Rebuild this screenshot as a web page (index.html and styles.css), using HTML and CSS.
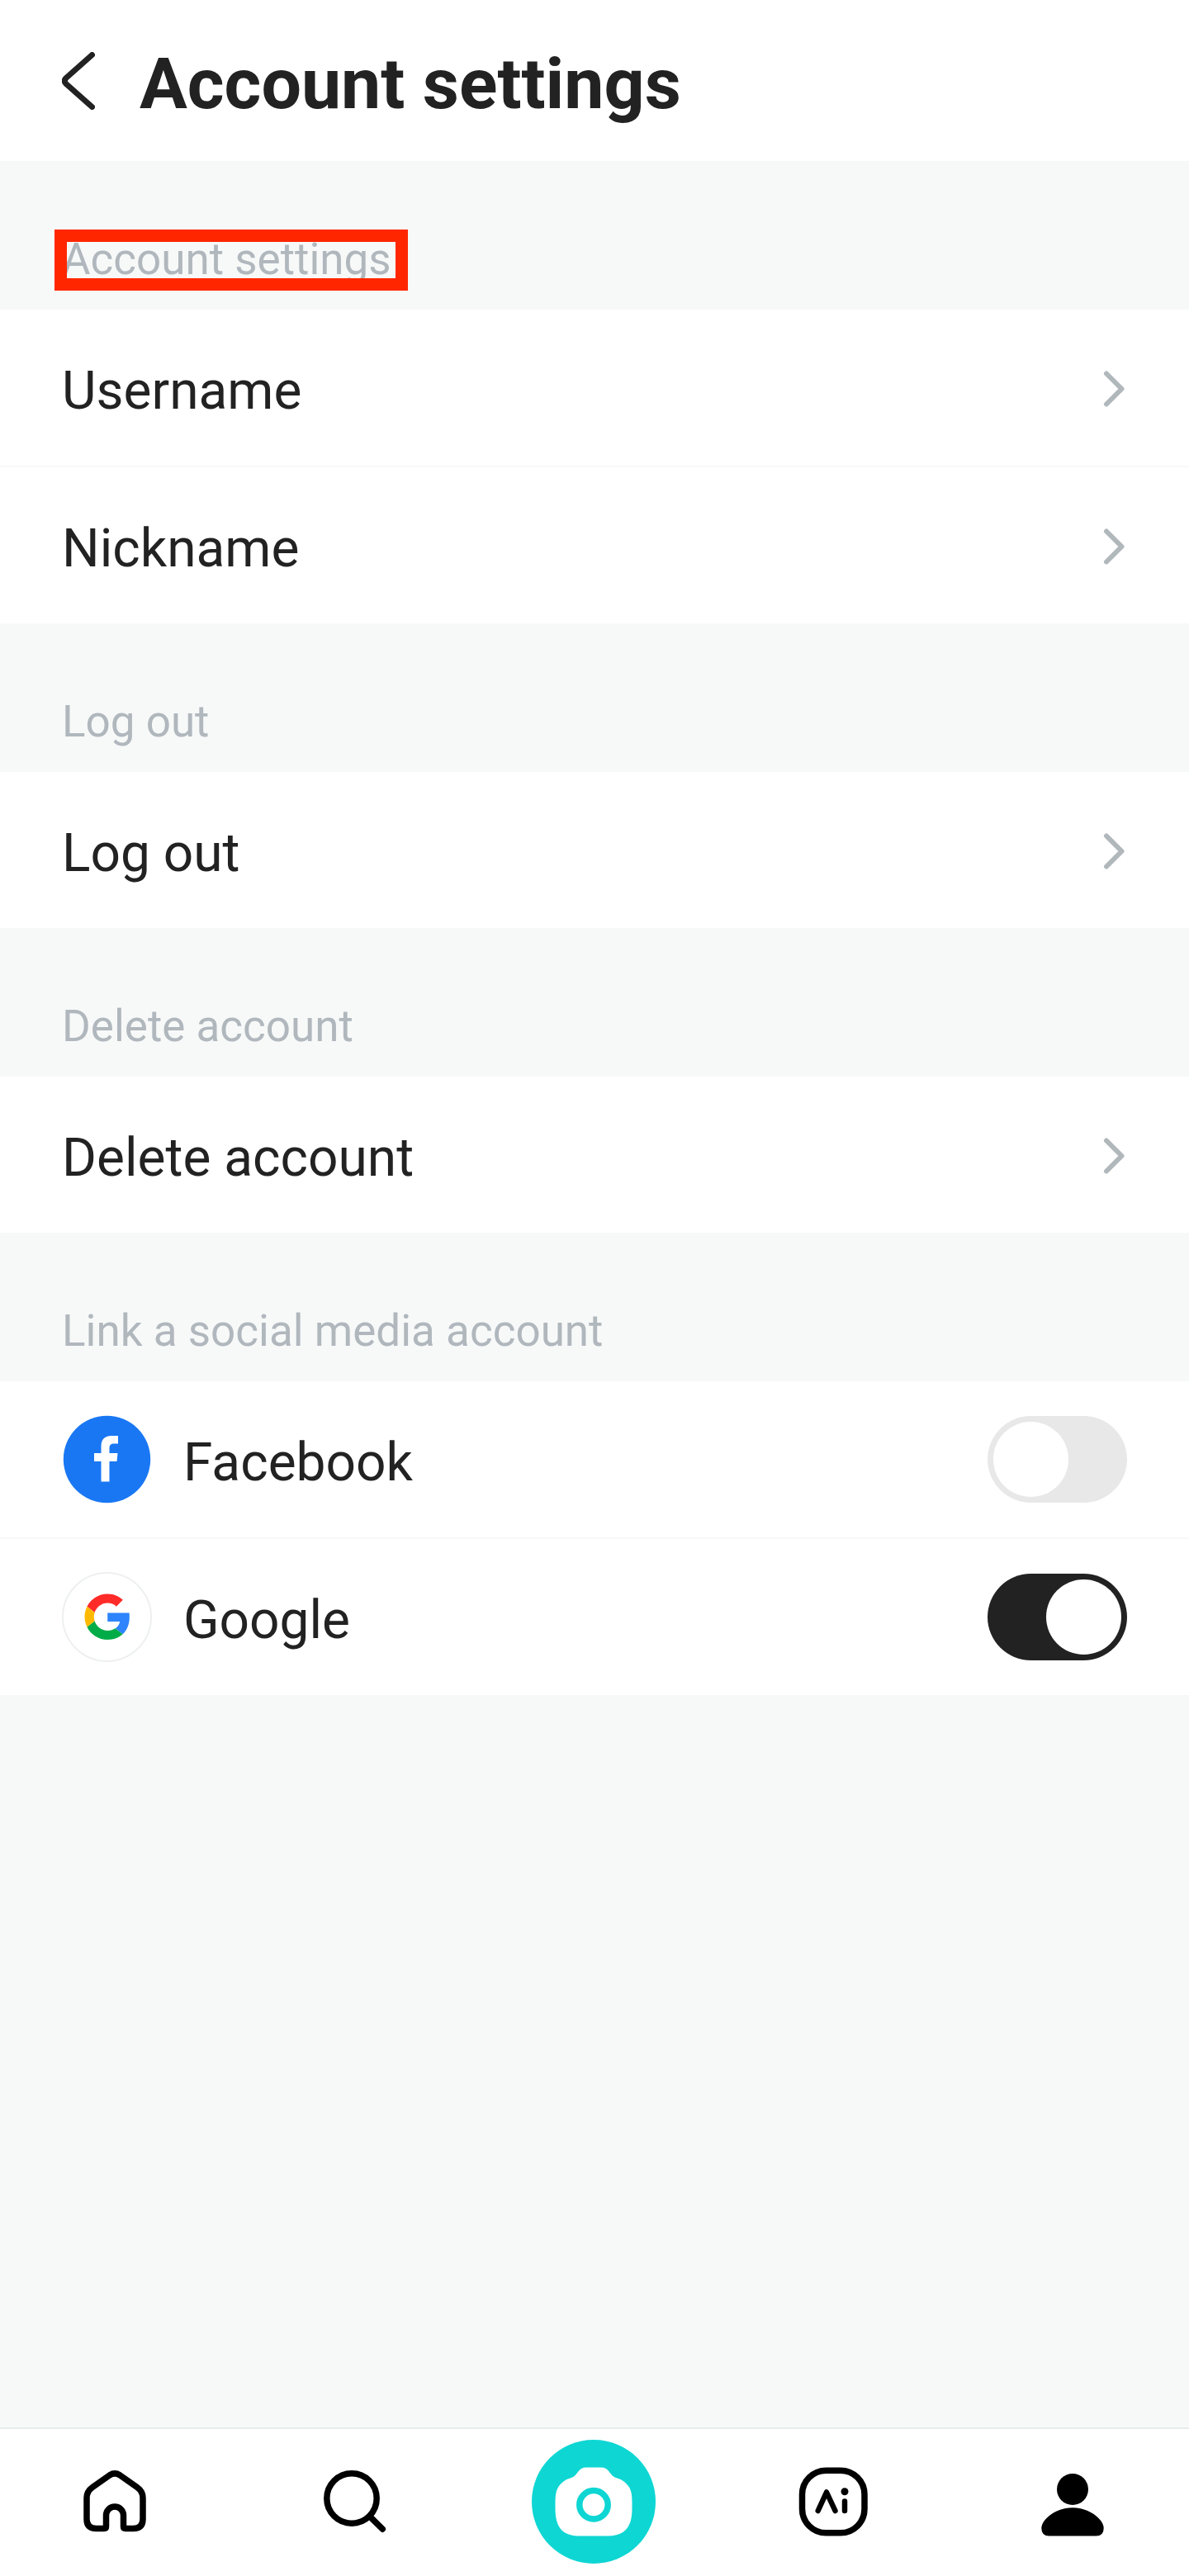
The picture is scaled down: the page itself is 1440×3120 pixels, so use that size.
FILE: index.html
```html
<!DOCTYPE html>
<html lang="en">
<head>
  <meta charset="utf-8">
  <meta name="viewport" content="width=device-width, initial-scale=1">
  <title>Account settings</title>
  <link rel="stylesheet" href="styles.css">
</head>
<body class="page">
  <header class="topbar">
    <button class="back" type="button" aria-label="Back">
      <svg class="back-icon" viewBox="0 0 40 70" aria-hidden="true"><path d="M36.500 3.500 5 31.500Q1.500 35 5 38.500L36.500 66.500"/></svg>
    </button>
    <h1 class="title">Account settings</h1>
  </header>

  <main class="content">
    <section>
      <h2 class="section-label"><span class="highlight">Account settings</span></h2>
      <ul class="list">
        <li class="item"><a class="row" href="#username"><span class="row-text">Username</span><svg class="chevron" viewBox="0 0 32 48" aria-hidden="true"><path d="M7 6.500 25.500 25 7 43.500"/></svg></a></li>
        <li class="item"><a class="row" href="#nickname"><span class="row-text">Nickname</span><svg class="chevron" viewBox="0 0 32 48" aria-hidden="true"><path d="M7 6.500 25.500 25 7 43.500"/></svg></a></li>
      </ul>
    </section>

    <section>
      <h2 class="section-label">Log out</h2>
      <ul class="list">
        <li class="item"><a class="row" href="#logout"><span class="row-text">Log out</span><svg class="chevron" viewBox="0 0 32 48" aria-hidden="true"><path d="M7 6.500 25.500 25 7 43.500"/></svg></a></li>
      </ul>
    </section>

    <section>
      <h2 class="section-label">Delete account</h2>
      <ul class="list">
        <li class="item"><a class="row" href="#delete"><span class="row-text">Delete account</span><svg class="chevron" viewBox="0 0 32 48" aria-hidden="true"><path d="M7 6.500 25.500 25 7 43.500"/></svg></a></li>
      </ul>
    </section>

    <section>
      <h2 class="section-label">Link a social media account</h2>
      <ul class="list">
        <li class="item">
          <label class="row" for="facebook">
            <svg class="brand" viewBox="0 0 109 109" aria-hidden="true">
              <circle cx="54.500" cy="54.500" r="52.700" fill="#1977f3"/>
              <path fill="#fff" d="M47.500 81.500V57H39V47h8.500v-8.500C47.500 30 52.500 26 60 26h8v9.500h-4.500c-4.500 0-6 2-6 5.500v6h10l-1 10h-9v24.500z"/>
            </svg>
            <span class="row-text">Facebook</span>
            <input class="switch" type="checkbox" role="switch" id="facebook">
          </label>
        </li>
        <li class="item">
          <label class="row" for="google">
            <svg class="brand" viewBox="0 0 109 109" aria-hidden="true">
              <circle cx="54.500" cy="54.500" r="53.500" fill="#fff" stroke="#eef0f0" stroke-width="2"/>
              <g transform="translate(27.500 26.500) scale(1.156)">
                <path fill="#ff2b29" d="M24 9.500c3.540 0 6.710 1.220 9.210 3.600l6.850-6.850C35.900 2.380 30.470 0 24 0 14.620 0 6.510 5.380 2.560 13.220l7.980 6.190C12.430 13.720 17.740 9.500 24 9.500z"/>
                <path fill="#2d84fc" d="M46.980 20H24v9h12.940c-.58 2.960-2.260 5.480-4.780 7.180l7.730 6c4.510-4.180 7.090-10.360 7.090-17.630 0-1.600 0-3-.2-4.550z"/>
                <path fill="#ffba00" d="M10.530 28.590c-.48-1.450-.76-2.990-.76-4.590s.27-3.140.76-4.590l-7.980-6.190C.92 16.460 0 20.120 0 24c0 3.880.92 7.540 2.560 10.780l7.970-6.190z"/>
                <path fill="#00ac47" d="M24 48c6.480 0 11.930-2.130 15.890-5.810l-7.730-6c-2.150 1.450-4.920 2.300-8.160 2.300-6.260 0-11.570-4.220-13.470-9.910l-7.980 6.190C6.510 42.620 14.620 48 24 48z"/>
              </g>
            </svg>
            <span class="row-text">Google</span>
            <input class="switch" type="checkbox" role="switch" id="google" checked>
          </label>
        </li>
      </ul>
    </section>
  </main>

  <nav class="tabbar" aria-label="Main">
    <a class="tab" href="#home" aria-label="Home">
      <svg class="tab-icon line" viewBox="0 0 150 150"><path d="M69 42.700 48 57.500Q41 62.500 41 70.500V96Q41 107.500 52.500 107.500H62Q64.500 107.500 64.500 105V91.500A10.500 10.500 0 0 1 85.500 91.500V105Q85.500 107.500 88 107.500H97.500Q109 107.500 109 96V70.500Q109 62.500 102 57.500L81 42.700Q75 39 69 42.700Z"/></svg>
    </a>
    <a class="tab" href="#search" aria-label="Search">
      <svg class="tab-icon line" viewBox="0 0 150 150"><circle cx="72" cy="71" r="30.200"/><path d="M95 94 109.300 108.200"/></svg>
    </a>
    <a class="tab" href="#camera" aria-label="Camera">
      <svg class="tab-icon" viewBox="0 0 150 150">
        <circle cx="75" cy="75" r="75" fill="#0dd6d3"/>
        <path fill="#fff" d="M66 33.500H84C93 33.500 94 41 99 44.500C102 46.500 106 46.500 110 49.500C119 55.500 121.500 62 121.500 75V83C121.500 106 113 116.500 92 116.500H58C37 116.500 28.500 106 28.500 83V75C28.500 62 31 55.500 40 49.500C44 46.500 48 46.500 51 44.500C56 41 57 33.500 66 33.500Z"/>
        <circle cx="75" cy="78.700" r="17.200" fill="none" stroke="#0dd6d3" stroke-width="7.500"/>
      </svg>
    </a>
    <a class="tab" href="#ai" aria-label="Ai">
      <svg class="tab-icon line" viewBox="0 0 150 150"><rect x="37.500" y="37.200" width="75.500" height="75.600" rx="29"/><path stroke-width="6.500" d="M56.700 86 67 63.500 77.500 86M89 74.500V86"/><circle cx="89" cy="62.700" r="4.500" fill="#000" stroke="none"/></svg>
    </a>
    <a class="tab" href="#profile" aria-label="Profile">
      <svg class="tab-icon" viewBox="0 0 150 150"><circle cx="75" cy="60" r="19"/><path d="M75 82.300C96 82.300 112.700 97 112.700 107Q112.700 116.600 103.500 116.600H46.500Q37.300 116.600 37.300 107C37.300 97 54 82.300 75 82.300Z"/></svg>
    </a>
  </nav>
</body>
</html>
```
FILE: styles.css
```css
*,
*::before,
*::after {
  box-sizing: border-box;
}

.page {
  display: flex;
  flex-direction: column;
  min-height: 100vh;
  margin: 0;
  background: #f7f9f9;
  color: #222;
  font-family: Roboto, "Liberation Sans", sans-serif;
}

.topbar {
  display: flex;
  align-items: center;
  gap: 54px;
  min-height: 195px;
  padding: 0 75px;
  background: #fff;
}

.back {
  display: flex;
  padding: 0;
  border: 0;
  background: none;
}

.back-icon {
  width: 40px;
  height: 70px;
  fill: none;
  stroke: #222;
  stroke-width: 7;
  stroke-linecap: round;
}

.title {
  margin: 0;
  padding-top: 8px;
  font-size: 86px;
  font-weight: 700;
  line-height: 100px;
}

.content {
  flex: 1;
}

.section-label {
  margin: 0;
  padding: 87px 75px 29px;
  color: #b1b8bd;
  font-size: 53px;
  font-weight: 400;
  line-height: 64px;
}

/* Red frame drawn over the label */
.highlight {
  position: relative;
  display: inline-block;
}

.highlight::after {
  content: "";
  position: absolute;
  inset: -4px -20px -6px -9px;
  border: 15px solid #ff2600;
}

.list {
  margin: 0;
  padding: 0;
  list-style: none;
}

.item + .item {
  border-top: 2px solid #f7f9f9;
}

.row {
  display: flex;
  align-items: center;
  gap: 38px;
  min-height: 189px;
  padding: 0 75px;
  background: #fff;
  color: inherit;
  text-decoration: none;
}

.row-text {
  flex: 1;
  padding-top: 9px;
  font-size: 64px;
  line-height: 76px;
}

.chevron {
  width: 32px;
  height: 48px;
  fill: none;
  stroke: #b1b8bc;
  stroke-width: 6;
  stroke-linecap: round;
  stroke-linejoin: round;
}

.brand {
  width: 109px;
  height: 109px;
}

.switch {
  display: flex;
  appearance: none;
  width: 169px;
  height: 105px;
  margin: 0;
  padding: 7px;
  border-radius: 53px;
  background: #e8e8e8;
}

.switch::before {
  content: "";
  width: 91px;
  height: 91px;
  border-radius: 50%;
  background: #fff;
}

.switch:checked {
  justify-content: flex-end;
  background: #222;
}

.tabbar {
  position: sticky;
  bottom: 0;
  display: flex;
  align-items: center;
  justify-content: space-between;
  min-height: 180px;
  padding: 0 66px 2px 64px;
  border-top: 2px solid #e9ecec;
  background: #fff;
}

.tab {
  display: flex;
  color: #000;
}

.tab-icon {
  width: 150px;
  height: 150px;
}

.line {
  fill: none;
  stroke: #000;
  stroke-width: 7.500;
  stroke-linecap: round;
  stroke-linejoin: round;
}
```
